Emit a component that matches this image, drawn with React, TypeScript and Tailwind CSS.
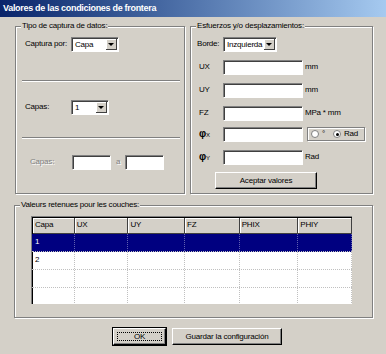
import React from 'react';

const bg = 'bg-[#d4d0c8]';

type GroupProps = {
  title: string;
  className?: string;
  children?: React.ReactNode;
};

const Group = ({ title, className = '', children }: GroupProps) => {
  return (
    <div className={`relative border border-[#808080] shadow-[inset_1px_1px_0_#fff,1px_1px_0_#fff] ${className}`}>
      <span className={`absolute -top-[6px] left-[5px] px-[1px] leading-[10px] ${bg}`}>{title}</span>
      {children}
    </div>
  );
};

const Sunken = ({ className = '', children }: { className?: string; children?: React.ReactNode }) => (
  <div
    className={`bg-white border-t border-l border-[#808080] shadow-[inset_1px_1px_0_#404040,1px_1px_0_#fff] ${className}`}
  >
    {children}
  </div>
);

const Select = ({ value, className = '' }: { value: string; className?: string }) => (
  <Sunken className={`flex h-[14px] ${className}`}>
    <span className="flex-1 pl-[3px] pt-[1px] leading-[11px]">{value}</span>
    <span className="mt-[1px] mr-[1px] w-[11px] h-[11px] flex items-center justify-center bg-[#d4d0c8] border-r border-b border-[#404040] shadow-[inset_1px_1px_0_#fff]">
      <span className="w-0 h-0 border-l-[3px] border-r-[3px] border-t-[3px] border-l-transparent border-r-transparent border-t-black" />
    </span>
  </Sunken>
);

const Etched = ({ className = '' }: { className?: string }) => (
  <div className={`h-[2px] border-t border-[#808080] border-b border-b-white ${className}`} />
);

const Button = ({ label, className = '', isDefault = false }: { label: string; className?: string; isDefault?: boolean }) => (
  <div
    className={`flex items-center justify-center border-t border-l border-white border-r border-b border-r-black border-b-black shadow-[inset_-1px_-1px_0_#808080] ${
      isDefault ? 'outline outline-1 outline-black' : ''
    } ${className}`}
  >
    {isDefault ? (
      <span className="flex items-center justify-center w-[calc(100%-6px)] h-[calc(100%-6px)] border border-dotted border-black">
        {label}
      </span>
    ) : (
      label
    )}
  </div>
);

const Phi = ({ sub }: { sub: string }) => (
  <span className="flex items-end w-[24px] pl-[8px]">
    <span className="text-[10px] font-bold leading-[10px]">φ</span>
    <span className="text-[6px] leading-[7px]">{sub}</span>
  </span>
);

const Radio = ({ checked }: { checked?: boolean }) => (
  <span className="w-[8px] h-[8px] rounded-full bg-white border border-[#808080] flex items-center justify-center">
    {checked && <span className="w-[3px] h-[3px] rounded-full bg-black" />}
  </span>
);

const cols = [
  { name: 'Capa', w: 'w-[42px]' },
  { name: 'UX', w: 'w-[54px]' },
  { name: 'UY', w: 'w-[57px]' },
  { name: 'FZ', w: 'w-[55px]' },
  { name: 'PHIX', w: 'w-[59px]' },
  { name: 'PHIY', w: 'w-[54px]' },
];

const rows = [
  { cells: ['1', '', '', '', '', ''], selected: true },
  { cells: ['2', '', '', '', '', ''], selected: false },
  { cells: ['', '', '', '', '', ''], selected: false },
  { cells: ['', '', '', '', '', ''], selected: false },
];

export default function App() {
  return (
    <div
      className={`w-[386px] h-[354px] overflow-hidden ${bg} font-['Liberation_Sans',Arial,sans-serif] text-[8px] tracking-[-0.2px] text-black`}
    >
      <div className="h-[17px] flex items-center pl-[3px] bg-gradient-to-r from-[#0a246a] to-[#a6caf0] text-white font-bold text-[9px] tracking-[-0.3px]">
        Valores de las condiciones de frontera
      </div>

      <div className="flex mt-[9px] pl-[15px] gap-[5px]">
        <Group title="Tipo de captura de datos:" className="w-[170px] h-[168px]">
          <div className="flex items-center pt-[10px] pl-[9px]">
            <span className="w-[46px]">Captura por:</span>
            <Select value="Capa" className="w-[47px]" />
          </div>
          <Etched className="mt-[29px] ml-[6px] w-[158px]" />
          <div className="flex items-center mt-[18px] pl-[9px]">
            <span className="w-[46px]">Capas:</span>
            <Select value="1" className="w-[37px]" />
          </div>
          <Etched className="mt-[23px] ml-[6px] w-[158px]" />
          <div className="flex items-center mt-[16px] pl-[14px]">
            <span className="w-[42px] text-[#808080] [text-shadow:1px_1px_0_#fff]">Capas:</span>
            <Sunken className="w-[38px] h-[14px]" />
            <span className="w-[15px] pl-[6px] text-[#808080] [text-shadow:1px_1px_0_#fff]">a</span>
            <Sunken className="w-[38px] h-[14px]" />
          </div>
        </Group>

        <Group title="Esfuerzos y/o desplazamientos:" className="w-[183px] h-[168px]">
          <div className="flex items-center pt-[10px] pl-[6px]">
            <span className="w-[26px]">Borde:</span>
            <Select value="Inzquierda" className="w-[53px]" />
          </div>
          <div className="flex items-center mt-[9px]">
            <span className="w-[32px] pl-[8px]">UX</span>
            <Sunken className="w-[79px] h-[14px]" />
            <span className="pl-[3px]">mm</span>
          </div>
          <div className="flex items-center mt-[9px]">
            <span className="w-[32px] pl-[8px]">UY</span>
            <Sunken className="w-[79px] h-[14px]" />
            <span className="pl-[3px]">mm</span>
          </div>
          <div className="flex items-center mt-[9px]">
            <span className="w-[32px] pl-[8px]">FZ</span>
            <Sunken className="w-[79px] h-[14px]" />
            <span className="pl-[3px]">MPa * mm</span>
          </div>
          <div className="flex items-center mt-[7px]">
            <Phi sub="X" />
            <span className="w-[8px]" />
            <Sunken className="w-[79px] h-[14px]" />
            <div className="ml-[5px] w-[58px] h-[14px] flex items-center gap-[3px] pl-[3px] border border-[#808080] shadow-[inset_1px_1px_0_#fff,1px_1px_0_#fff]">
              <Radio />
              <span className="w-[8px]">°</span>
              <Radio checked />
              <span>Rad</span>
            </div>
          </div>
          <div className="flex items-center mt-[9px]">
            <Phi sub="Y" />
            <span className="w-[8px]" />
            <Sunken className="w-[79px] h-[14px]" />
            <span className="pl-[3px]">Rad</span>
          </div>
          <div className="pl-[24px] mt-[8px]">
            <Button label="Aceptar valores" className="w-[102px] h-[17px]" />
          </div>
        </Group>
      </div>

      <Group title="Valeurs retenues pour les couches:" className="ml-[14px] mt-[11px] w-[359px] h-[113px]">
        <div className="ml-[16px] mt-[10px] w-[321px] h-[88px] bg-white border-t border-l border-[#808080] shadow-[inset_1px_1px_0_#000] overflow-hidden">
          <div className="flex h-[17px] pl-[1px] pt-[1px]">
            {cols.map((c) => (
              <div
                key={c.name}
                className={`${c.w} h-[16px] pl-[2px] leading-[14px] bg-[#d4d0c8] border-r border-b border-[#404040] shadow-[inset_1px_1px_0_#fff]`}
              >
                {c.name}
              </div>
            ))}
          </div>
          {rows.map((r, i) => (
            <div
              key={i}
              className={`flex h-[18px] pl-[1px] border-b border-dotted border-[#c0c0c0] ${r.selected ? 'bg-[#000080] text-white' : ''}`}
            >
              {r.cells.map((cell, j) => (
                <div
                  key={j}
                  className={`${cols[j].w} h-full pl-[2px] leading-[16px] border-r border-dotted ${
                    r.selected ? 'border-[#6060b0]' : 'border-[#c0c0c0]'
                  }`}
                >
                  {cell}
                </div>
              ))}
            </div>
          ))}
        </div>
      </Group>

      <div className="flex mt-[10px] pl-[113px] gap-[6px]">
        <Button label="OK" isDefault className="w-[53px] h-[17px]" />
        <Button label="Guardar la configuración" className="w-[110px] h-[17px]" />
      </div>
    </div>
  );
}
